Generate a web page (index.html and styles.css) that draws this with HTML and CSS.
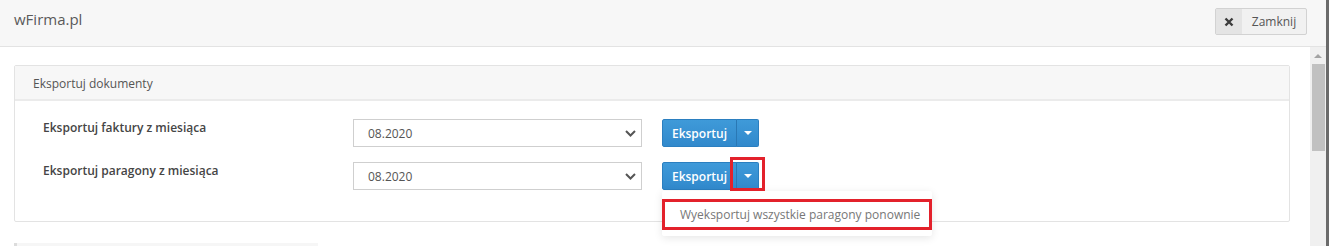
FILE: index.html
```html
<!DOCTYPE html>
<html lang="pl">
<head>
    <meta charset="UTF-8">
    <meta name="viewport" content="width=device-width, initial-scale=1.0">
    <title>wFirma.pl</title>
    <link rel="stylesheet" href="styles.css">
</head>
<body>
    <div class="window">
        <div class="modal-header">
            <span class="modal-title">wFirma.pl</span>
            <button class="close-btn">
                <span class="close-icon"><svg width="10" height="10" viewBox="0 0 10 10"><path d="M1.5 1.5l7 7M8.5 1.5l-7 7" stroke="#3c3c3c" stroke-width="2.4"/></svg></span>
                <span class="close-text">Zamknij</span>
            </button>
        </div>
        <div class="modal-body">
            <div class="content">
                <div class="panel">
                    <div class="panel-heading">Eksportuj dokumenty</div>
                    <div class="panel-body">
                        <div class="form-row">
                            <label class="form-label">Eksportuj faktury z miesiąca</label>
                            <div class="select">
                                <span>08.2020</span>
                                <svg class="chevron" width="11" height="7" viewBox="0 0 11 7"><path d="M1 1l4.5 4.5L10 1" fill="none" stroke="#555" stroke-width="2"/></svg>
                            </div>
                            <div class="btn-group">
                                <button class="btn">Eksportuj</button>
                                <button class="btn btn-caret"><span class="caret"></span></button>
                            </div>
                        </div>
                        <div class="form-row">
                            <label class="form-label">Eksportuj paragony z miesiąca</label>
                            <div class="select">
                                <span>08.2020</span>
                                <svg class="chevron" width="11" height="7" viewBox="0 0 11 7"><path d="M1 1l4.5 4.5L10 1" fill="none" stroke="#555" stroke-width="2"/></svg>
                            </div>
                            <div class="btn-group open">
                                <button class="btn">Eksportuj</button>
                                <button class="btn btn-caret marked"><span class="caret"></span></button>
                                <ul class="dropdown-menu">
                                    <li class="marked-item">Wyeksportuj wszystkie paragony ponownie</li>
                                </ul>
                            </div>
                        </div>
                    </div>
                </div>
                <div class="next-panel"></div>
            </div>
            <div class="scrollbar">
                <div class="scroll-arrow"></div>
                <div class="scroll-thumb"></div>
            </div>
        </div>
    </div>
</body>
</html>
```

FILE: styles.css
```css
body {
    margin: 0;
    font-family: 'Open Sans', sans-serif;
    background: #6b6b6b;
    overflow: hidden;
}

.window {
    width: 1326px;
    height: 246px;
    background: #fff;
    display: flex;
    flex-direction: column;
    overflow: hidden;
}

.modal-header {
    flex-shrink: 0;
    height: 47px;
    box-sizing: border-box;
    background: #f7f7f7;
    border-bottom: 1px solid #e3e3e3;
    display: flex;
    justify-content: space-between;
    align-items: flex-start;
    padding: 0 19px 0 14px;
}

.modal-title {
    font-size: 15px;
    color: #5a5a5a;
    margin-top: 9px;
}

.close-btn {
    margin-top: 8px;
    height: 27px;
    width: 92px;
    padding: 0;
    display: flex;
    border: 1px solid #d2d2d2;
    border-radius: 2px;
    background: #f1f1f1;
    font-family: 'Open Sans', sans-serif;
    font-size: 12px;
    color: #555;
}

.close-icon {
    width: 26px;
    height: 100%;
    background: #e4e4e4;
    display: flex;
    align-items: center;
    justify-content: center;
}

.close-text {
    flex: 1;
    height: 100%;
    display: flex;
    align-items: center;
    justify-content: center;
}

.modal-body {
    flex: 1;
    min-height: 0;
    display: flex;
}

.content {
    flex: 1;
    padding: 18px 20px 0 14px;
}

.panel {
    border: 1px solid #e3e3e3;
    border-radius: 2px;
}

.panel-heading {
    height: 33px;
    background: #f7f7f7;
    border-bottom: 2px solid #ebebeb;
    padding-left: 18px;
    font-size: 12px;
    color: #555;
    line-height: 36px;
}

.panel-body {
    padding: 18px 28px 31px;
    display: flex;
    flex-direction: column;
    gap: 15px;
}

.form-row {
    display: flex;
    align-items: flex-start;
}

.form-label {
    width: 310px;
    font-size: 12px;
    font-weight: 600;
    color: #454545;
    line-height: 16px;
    padding-top: 1px;
}

.select {
    width: 289px;
    height: 28px;
    box-sizing: border-box;
    border: 1px solid #cfcfcf;
    display: flex;
    align-items: center;
    justify-content: space-between;
    padding: 0 5px 0 14px;
    font-size: 12px;
    color: #555;
}

.btn-group {
    position: relative;
    display: flex;
    margin-left: 20px;
}

.btn {
    height: 28px;
    width: 75px;
    border: 1px solid #2b7fc0;
    background: linear-gradient(#3f9ad9, #3189cc);
    color: #fff;
    font-family: 'Open Sans', sans-serif;
    font-size: 12px;
    font-weight: 600;
    padding: 0;
    border-radius: 2px 0 0 2px;
}

.btn-caret {
    width: 23px;
    padding: 0;
    border-left-color: #2a78b4;
    border-radius: 0 2px 2px 0;
    margin-left: -1px;
    display: flex;
    align-items: center;
    justify-content: center;
}

.caret {
    border-top: 4px solid #fff;
    border-left: 4px solid transparent;
    border-right: 4px solid transparent;
}

.marked {
    position: relative;
}

.marked::after {
    content: '';
    position: absolute;
    left: -7px;
    right: -7px;
    top: -6px;
    bottom: -2px;
    border: 3px solid #e3212b;
    z-index: 2;
}

.dropdown-menu {
    position: absolute;
    top: 29px;
    left: 0;
    width: 270px;
    margin: 0;
    padding: 8px 0 6px;
    list-style: none;
    background: #fff;
    border-radius: 2px;
    box-shadow: 0 2px 8px rgba(0, 0, 0, 0.1);
}

.marked-item {
    height: 25px;
    border: 3px solid #e3212b;
    padding-left: 15px;
    font-size: 12px;
    line-height: 25px;
    color: #777;
    width: 249px;
}

.next-panel {
    margin-top: 21px;
    width: 304px;
    height: 10px;
    background: #f6f6f6;
    border-left: 3px solid #dcdcdc;
    box-sizing: border-box;
}

.scrollbar {
    width: 16px;
    background: #f0f0f0;
    display: flex;
    flex-direction: column;
    align-items: center;
}

.scroll-arrow {
    margin-top: 7px;
    border-bottom: 4px solid #a3a3a3;
    border-left: 4px solid transparent;
    border-right: 4px solid transparent;
}

.scroll-thumb {
    margin-top: 6px;
    width: 13px;
    height: 87px;
    background: #c1c1c1;
}
```
